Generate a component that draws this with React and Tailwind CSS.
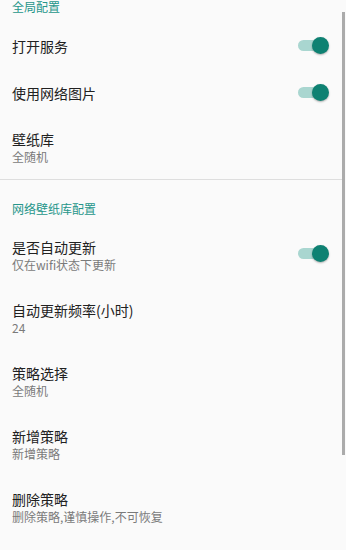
import React, { useState } from 'react';

const FONT = { fontFamily: '"Noto Sans CJK SC", "Noto Sans", sans-serif' };

const Toggle = ({ on, onChange, className = '' }) => (
  <button
    type="button"
    onClick={() => onChange(!on)}
    className={`relative w-[31px] h-[17px] shrink-0 ${className}`}
  >
    <span
      className={`absolute left-0 top-[3px] w-[26px] h-[11px] rounded-full ${
        on ? 'bg-[#a9d6d0]' : 'bg-[#c4c4c4]'
      }`}
    />
    <span
      className={`absolute top-0 w-[17px] h-[17px] rounded-full shadow-[0_1px_2px_rgba(0,0,0,0.3)] ${
        on ? 'right-0 bg-[#0e8172]' : 'left-[-4px] bg-[#f1f1f1]'
      }`}
    />
  </button>
);

const Header = ({ children, className }) => (
  <div className={`pl-[12px] text-[12px] leading-[14px] text-[#26968a] ${className}`}>
    {children}
  </div>
);

const Row = ({ title, summary, toggle }) => (
  <div
    className={`flex items-center justify-between pl-[12px] pr-[17px] ${
      summary ? 'h-[63px]' : 'h-[47px]'
    }`}
  >
    <div className="flex flex-col">
      <span className="text-[14px] leading-[18px] text-[#212121]">{title}</span>
      {summary && (
        <span className="text-[12px] leading-[18px] text-[#7a7a7a]">{summary}</span>
      )}
    </div>
    {toggle}
  </div>
);

export default function App() {
  const [service, setService] = useState(true);
  const [netImage, setNetImage] = useState(true);
  const [autoUpdate, setAutoUpdate] = useState(true);

  return (
    <div className="relative w-[346px] h-[550px] overflow-hidden bg-[#fafafa]" style={FONT}>
      {/* global config */}
      <Header className="pb-[8px]">全局配置</Header>
      <Row title="打开服务" toggle={<Toggle on={service} onChange={setService} />} />
      <Row title="使用网络图片" toggle={<Toggle on={netImage} onChange={setNetImage} />} />
      <Row title="壁纸库" summary="全随机" />
      <div className="h-px bg-[#dedede] mr-[4px]" />

      {/* network wallpaper config */}
      <Header className="pt-[22px] pb-[8px]">网络壁纸库配置</Header>
      <Row
        title="是否自动更新"
        summary="仅在wifi状态下更新"
        toggle={<Toggle on={autoUpdate} onChange={setAutoUpdate} className="mt-[-4px]" />}
      />
      <Row title="自动更新频率(小时)" summary="24" />
      <Row title="策略选择" summary="全随机" />
      <Row title="新增策略" summary="新增策略" />
      <Row title="删除策略" summary="删除策略,谨慎操作,不可恢复" />

      {/* scrollbar */}
      <div className="absolute right-[1px] top-[12px] w-[3px] h-[443px] bg-[#ababab]" />
    </div>
  );
}
